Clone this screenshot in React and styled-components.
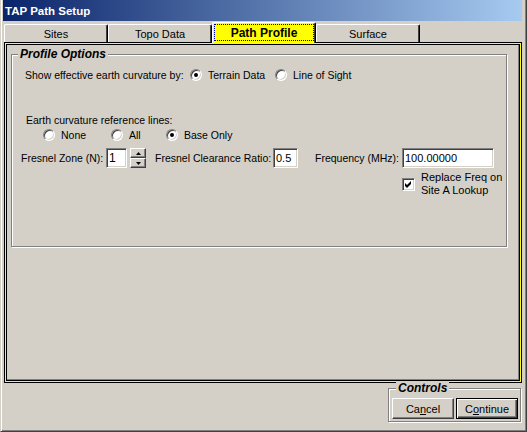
import React from "react";
import styled, { createGlobalStyle, css } from "styled-components";

const GlobalStyle = createGlobalStyle`
  body {
    margin: 0;
    background: #d4d0c8;
    font-family: "Liberation Sans", Arial, sans-serif;
    font-size: 10.5px;
    color: #000;
  }
`;

const Window = styled.div`
  width: 527px;
  height: 432px;
  box-sizing: border-box;
  display: flex;
  flex-direction: column;
  background: #d4d0c8;
  border-left: 1px solid #d4d0c8;
  border-right: 1px solid #404040;
  border-bottom: 1px solid #404040;
  box-shadow: inset 1px 0 #fff, inset -1px -1px #808080;
  padding: 0 4px 0 2px;
`;

const TitleBar = styled.div`
  height: 21px;
  display: flex;
  align-items: center;
  padding-left: 2px;
  background: linear-gradient(to right, #0a246a, #a6caf0);
  color: #fff;
  font-weight: bold;
  font-size: 11.5px;
`;

const TabRow = styled.div`
  height: 21px;
  display: flex;
  align-items: flex-end;
  padding-left: 1px;
  position: relative;
  z-index: 1;
`;

const Tab = styled.div`
  width: 104px;
  height: 18px;
  box-sizing: border-box;
  display: flex;
  align-items: center;
  justify-content: center;
  font-size: 11px;
  border-top: 1px solid #fff;
  border-left: 1px solid #fff;
  border-right: 1px solid #000;
  border-radius: 2px 2px 0 0;
  box-shadow: inset -1px 0 #404040;
  ${(p) =>
    p.$active &&
    css`
      height: 21px;
      margin-bottom: -1px;
      background: #ffff00;
      font-weight: bold;
      font-size: 12px;
      padding: 1px 1px 2px 1px;
    `}
`;

const Focus = styled.span`
  flex: 1;
  align-self: stretch;
  display: flex;
  align-items: center;
  justify-content: center;
  border: 1px dotted #0000a0;
`;

const Panel = styled.div`
  width: 518px;
  height: 341px;
  box-sizing: border-box;
  margin-left: 1px;
  border: 1px solid #000;
  box-shadow: inset 0 0 0 1px #ffff00, inset 0 0 0 2px #000,
    inset -3px -3px 0 0 #808080;
  padding: 11px 10px 0 6px;
`;

const Group = styled.div`
  position: relative;
  box-sizing: border-box;
  border: 1px solid #808080;
  box-shadow: 1px 1px 0 #fff, inset 1px 1px 0 #fff;
`;

const Legend = styled.span`
  position: absolute;
  top: -8px;
  left: ${(p) => p.$left || 6}px;
  padding: 0 2px;
  background: #d4d0c8;
  font-weight: bold;
  font-style: italic;
  font-size: 12px;
  line-height: 14px;
`;

const OptionsGroup = styled(Group)`
  width: 496px;
  height: 193px;
  padding: 12px 0 0 13px;
  display: flex;
  flex-direction: column;
`;

const Row = styled.div`
  display: flex;
  align-items: center;
  height: ${(p) => p.$h || 16}px;
  margin-top: ${(p) => p.$mt || 0}px;
  margin-left: ${(p) => p.$ml || 0}px;
`;

const Label = styled.span`
  width: ${(p) => (p.$w ? `${p.$w}px` : "auto")};
  flex-shrink: 0;
  white-space: nowrap;
`;

const RadioItem = styled.label`
  display: flex;
  align-items: center;
  gap: 6px;
  width: ${(p) => (p.$w ? `${p.$w}px` : "auto")};
  flex-shrink: 0;
`;

const RadioDot = styled.span`
  position: relative;
  width: 12px;
  height: 12px;
  box-sizing: border-box;
  border-radius: 50%;
  background: #fff;
  border: 1px solid;
  border-color: #808080 #fff #fff #808080;
  box-shadow: inset 1px 1px #404040, inset -1px -1px #d4d0c8;
  ${(p) =>
    p.$checked &&
    css`
      &::after {
        content: "";
        position: absolute;
        left: 3px;
        top: 3px;
        width: 4px;
        height: 4px;
        border-radius: 50%;
        background: #000;
      }
    `}
`;

const Field = styled.div`
  width: ${(p) => p.$w}px;
  height: 20px;
  box-sizing: border-box;
  flex-shrink: 0;
  display: flex;
  align-items: center;
  padding-left: 2px;
  background: #fff;
  border: 1px solid;
  border-color: #808080 #fff #fff #808080;
  box-shadow: inset 1px 1px #404040, inset -1px -1px #d4d0c8;
  font-size: ${(p) => p.$fs || 11}px;
`;

const Spinner = styled.div`
  display: flex;
  flex-direction: column;
  width: 16px;
  height: 20px;
  margin: 0 9px 0 3px;
`;

const SpinButton = styled.div`
  flex: 1;
  box-sizing: border-box;
  display: flex;
  align-items: center;
  justify-content: center;
  border: 1px solid;
  border-color: #fff #404040 #404040 #fff;
  box-shadow: inset -1px -1px #808080;
`;

const CheckRow = styled.div`
  display: flex;
  align-items: flex-start;
  gap: 6px;
  margin: 3px 0 0 377px;
`;

const CheckBox = styled.span`
  width: 13px;
  height: 13px;
  margin-top: 7px;
  box-sizing: border-box;
  display: flex;
  align-items: center;
  justify-content: center;
  background: #fff;
  border: 1px solid;
  border-color: #808080 #fff #fff #808080;
  box-shadow: inset 1px 1px #404040, inset -1px -1px #d4d0c8;
`;

const CheckText = styled.span`
  font-size: 11px;
  line-height: 13px;
`;

const Footer = styled.div`
  display: flex;
  justify-content: flex-end;
  padding: 5px 1px 0 0;
`;

const ControlsGroup = styled(Group)`
  width: 133px;
  height: 34px;
  display: flex;
  align-items: flex-start;
  gap: 2px;
  padding: 9px 0 0 3px;
`;

const Button = styled.div`
  width: 62px;
  height: 21px;
  box-sizing: border-box;
  display: flex;
  align-items: center;
  justify-content: center;
  font-size: 11px;
  border: 1px solid;
  border-color: #fff #404040 #404040 #fff;
  box-shadow: inset -1px -1px #808080;
  ${(p) =>
    p.$default &&
    css`
      border-color: #000;
      box-shadow: inset 1px 1px #fff, inset -1px -1px #404040,
        inset -2px -2px #808080;
    `}
`;

const Key = styled.span`
  text-decoration: underline;
`;

const Radio = ({ checked, children, w }) => (
  <RadioItem $w={w}>
    <RadioDot $checked={checked} />
    <span>{children}</span>
  </RadioItem>
);

const Arrow = ({ up }) => (
  <svg width="5" height="3" viewBox="0 0 5 3">
    <path d={up ? "M2.5 0 L5 3 L0 3 Z" : "M0 0 L5 0 L2.5 3 Z"} fill="#000" />
  </svg>
);

export default function App() {
  return (
    <>
      <GlobalStyle />
      <Window>
        <TitleBar>TAP Path Setup</TitleBar>
        <TabRow>
          <Tab>Sites</Tab>
          <Tab>Topo Data</Tab>
          <Tab $active>
            <Focus>Path Profile</Focus>
          </Tab>
          <Tab>Surface</Tab>
        </TabRow>
        <Panel>
          <OptionsGroup>
            <Legend>Profile Options</Legend>
            <Row>
              <Label $w={165}>Show effective earth curvature by:</Label>
              <Radio checked w={85}>
                Terrain Data
              </Radio>
              <Radio>Line of Sight</Radio>
            </Row>
            <Row $mt={29} $h={15} $ml={1}>
              <Label>Earth curvature reference lines:</Label>
            </Row>
            <Row $ml={18}>
              <Radio w={68}>None</Radio>
              <Radio w={55}>All</Radio>
              <Radio checked>Base Only</Radio>
            </Row>
            <Row $mt={5} $h={20} $ml={-4}>
              <Label $w={85}>Fresnel Zone (N):</Label>
              <Field $w={21} $fs={12}>
                1
              </Field>
              <Spinner>
                <SpinButton>
                  <Arrow up />
                </SpinButton>
                <SpinButton>
                  <Arrow />
                </SpinButton>
              </Spinner>
              <Label $w={118}>Fresnel Clearance Ratio:</Label>
              <Field $w={25}>0.5</Field>
              <Label $w={17} />
              <Label $w={87}>Frequency (MHz):</Label>
              <Field $w={92}>100.00000</Field>
            </Row>
            <CheckRow>
              <CheckBox>
                <svg width="7" height="7" viewBox="0 0 7 7">
                  <path d="M0 2 L2 4 L6 0 L6 3 L2 7 L0 5 Z" fill="#000" />
                </svg>
              </CheckBox>
              <CheckText>
                Replace Freq on
                <br />
                Site A Lookup
              </CheckText>
            </CheckRow>
          </OptionsGroup>
        </Panel>
        <Footer>
          <ControlsGroup>
            <Legend $left={7}>Controls</Legend>
            <Button>
              Ca<Key>n</Key>cel
            </Button>
            <Button $default>
              C<Key>o</Key>ntinue
            </Button>
          </ControlsGroup>
        </Footer>
      </Window>
    </>
  );
}
